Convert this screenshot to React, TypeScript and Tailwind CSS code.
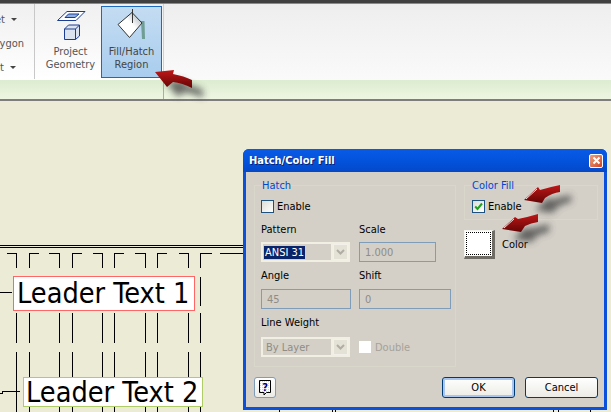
const ui = "font-['DejaVu_Sans',sans-serif] font-stretch-condensed";

const verticals = [16, 29, 59, 72, 102, 114, 145, 157, 188, 200];
const ticks = [
  [7, 16],
  [29, 39],
  [49, 59],
  [72, 82],
  [93, 102],
  [114, 124],
  [135, 145],
  [157, 167],
  [179, 188],
  [200, 212],
  [220, 243],
];

function CanvasLines() {
  return (
    <svg className="absolute left-0 top-0" width="611" height="412" shapeRendering="crispEdges">
      <g stroke="#000" strokeWidth="1" fill="none">
        <path d="M0 245.5H243M0 247.5H243" />
        {ticks.map(([a, b]) => (
          <path key={a} d={`M${a} 253.5H${b}`} />
        ))}
        {verticals.map((x) => (
          <path key={x} d={`M${x + 0.5} 253V268M${x + 0.5} 313V343M${x + 0.5} 352V412`} />
        ))}
        <path d="M200.5 277V306" />
        <path d="M0 292.5H12M0 393.5H2V391.5H20" />
        <path d="M279.5 410V412M332.5 410V412M335.5 410V412M553.5 410V412M558.5 410V412M590.5 410V412" />
      </g>
    </svg>
  );
}

function Arrows() {
  const arrows = [
    "M155 72 L174 70 L173 74 Q184 76 192 80 L192 88 Q182 83 173 82 L167 87 Z",
    "M524 200 L538 187 L540 190 Q550 187 560 185 L560 192 Q552 193 545 198 L542 203 Z",
    "M502 229 L515 217 L518 219 Q528 217 538 214 L538 222 Q531 223 525 226 L521 232 Z",
  ];
  return (
    <svg className="absolute left-0 top-0 pointer-events-none" width="611" height="412">
      <defs>
        <filter id="soft" x="-50%" y="-50%" width="200%" height="200%">
          <feGaussianBlur stdDeviation="3.5" />
        </filter>
        <linearGradient id="red" x1="0" y1="0" x2="0" y2="1">
          <stop offset="0" stopColor="#c01818" />
          <stop offset="1" stopColor="#640404" />
        </linearGradient>
      </defs>
      {arrows.map((d, i) => (
        <g key={i}>
          <path d={d} fill="#444" opacity="0.8" filter="url(#soft)" transform="translate(11 10)" />
          <path d={d} fill="url(#red)" />
        </g>
      ))}
      <path d="M526 199 L537 189M504 228 L514 219" stroke="#f6d8d8" strokeWidth="1" />
    </svg>
  );
}

function ProjectIcon() {
  return (
    <svg width="30" height="30" viewBox="0 0 30 30">
      <path d="M1.5 10.5 L11 1.5 H29 L20 10.5 Z" fill="#fff" stroke="#1c3d94" />
      <path d="M9 7.5 L12.5 4 H23 L19 7.5 Z" fill="#8fb0e0" stroke="#1c3d94" />
      <path d="M8.5 19 L12.5 15 H23.5 V26 L19.5 29.5 H8.5 Z" fill="#dbe3ee" stroke="#1c3d94" />
      <path d="M8.5 19 H19.5 V29.5 M19.5 19 L23.5 15" fill="none" stroke="#1c3d94" />
    </svg>
  );
}

function FillIcon() {
  return (
    <svg width="30" height="32" viewBox="0 0 30 32">
      <defs>
        <linearGradient id="dia" x1="0" y1="1" x2="1" y2="0">
          <stop offset="0" stopColor="#fff" />
          <stop offset="0.55" stopColor="#fff" />
          <stop offset="1" stopColor="#9aa4ac" />
        </linearGradient>
      </defs>
      <path d="M24 12 H27.5 L28 30 H25 Z" fill="#6f9e94" />
      <path d="M1 15.5 L15 3.5 L25 14 L12.5 28.5 Z" fill="url(#dia)" stroke="#333" />
      <path d="M15.5 0 V14" stroke="#333" />
    </svg>
  );
}

function HelpIcon() {
  return (
    <svg width="14" height="17" viewBox="0 0 14 17">
      <defs>
        <pattern id="dots" width="2" height="2" patternUnits="userSpaceOnUse">
          <rect width="2" height="2" fill="#fff" />
          <rect width="1" height="1" fill="#f2e23c" />
        </pattern>
      </defs>
      <path d="M1.5 1.5 H12.5 V13.5 H8.5 L6 16 V13.5 H1.5 Z" fill="url(#dots)" stroke="#000" />
      <text x="7" y="11.5" textAnchor="middle" fontSize="11" fontWeight="700" fill="#000080" fontFamily="DejaVu Sans, sans-serif">?</text>
    </svg>
  );
}

function RibbonStub({ text, caret, right }: { text: string; caret?: boolean; right: string }) {
  return (
    <div className={`flex items-center justify-end gap-[6px] h-[24px] whitespace-nowrap ${right}`}>
      <span>{text}</span>
      {caret && <span className="w-0 h-0 border-x-[3px] border-x-transparent border-t-[3px] border-t-[#444]" />}
    </div>
  );
}

function Ribbon() {
  return (
    <div className={`${ui} flex h-[76px] bg-gradient-to-b from-[#f0f0f0] to-white text-[11px] leading-[13px] text-[#555]`}>
      <div className="w-[35px] overflow-hidden border-r border-[#c8c8c8] mb-[1px] flex flex-col justify-start pt-[3px]">
        <RibbonStub text="et" caret right="pr-[17px]" />
        <RibbonStub text="lygon" right="pr-[10px]" />
        <RibbonStub text="ct" caret right="pr-[18px]" />
      </div>
      <div className="w-[66px] flex flex-col items-center pt-[6px] pl-[5px] text-center">
        <ProjectIcon />
        <div className="mt-[5px] leading-[13px]">Project<br />Geometry</div>
      </div>
      <div className="w-[61px] h-[72px] mt-[2px] border border-[#1c6ac0] bg-gradient-to-b from-[#c4dcf2] to-[#a9cdee] flex flex-col items-center pt-[2px] text-center text-[#444]">
        <FillIcon />
        <div className="mt-[4px] leading-[13px]">Fill/Hatch<br />Region</div>
      </div>
      <div className="w-[1px]" />
      <div className="flex-1 border-l border-[#d0d0d0] bg-gradient-to-b from-[#eeeeee] to-[#fafafa]" />
    </div>
  );
}

function DropDown({ value, selected, disabled }: { value: string; selected?: boolean; disabled?: boolean }) {
  return (
    <div className="w-[89px] h-[20px] bg-[#f1efe4] flex items-center p-[2px] gap-[2px]">
      <div className="w-[71px] h-[16px] bg-[#d4d0c8] flex items-center pl-[1px]">
        <span className={selected ? "bg-[#0a246a] text-white px-[1px] leading-[13px]" : disabled ? "text-[#8f8c84] pl-[2px]" : ""}>
          {value}
        </span>
      </div>
      <div className="w-[15px] h-[16px] bg-[#e4e1d6] border border-[#f2f0e8] flex items-center justify-center">
        <svg width="9" height="6" viewBox="0 0 9 6">
          <path d="M1 1 L4.5 4.5 L8 1" fill="none" stroke="#b0ada4" strokeWidth="2" />
        </svg>
      </div>
    </div>
  );
}

function TextBox({ value, width }: { value: string; width: string }) {
  return (
    <div className={`${width} h-[20px] border border-[#7f9db9] flex items-center pl-[5px] text-[#8f8c84]`}>{value}</div>
  );
}

function CheckBox({ checked }: { checked?: boolean }) {
  return (
    <div className="w-[13px] h-[13px] border border-[#1c5180] bg-gradient-to-br from-[#dcdcd7] to-white flex items-center justify-center">
      {checked && (
        <svg width="9" height="9" viewBox="0 0 9 9">
          <path d="M1.2 4.5 L3.5 7 L8 1.5" fill="none" stroke="#21a121" strokeWidth="2" />
        </svg>
      )}
    </div>
  );
}

function XpButton({ label, isDefault }: { label: string; isDefault?: boolean }) {
  return (
    <button
      className={`w-[73px] h-[21px] rounded-[3px] border border-[#003c74] bg-gradient-to-b from-white to-[#ecebe5] text-black text-[11px] ${isDefault ? "shadow-[inset_0_0_0_2px_#a9c4ee]" : ""}`}
    >
      {label}
    </button>
  );
}

function HatchDialog() {
  return (
    <div className={`${ui} absolute left-[243px] top-[149px] w-[364px] h-[261px] rounded-t-[6px] bg-[#0a50dc] flex flex-col text-[11px] leading-[13px] text-black`}>
      <div className="h-[23px] shrink-0 rounded-t-[6px] bg-gradient-to-b from-[#0a5ae6] via-[#0353dd] to-[#0448c8] flex items-center justify-between pl-[6px] pr-[4px]">
        <span className="text-white font-bold text-[11px] [text-shadow:1px_1px_#0a1f70]">Hatch/Color Fill</span>
        <div className="w-[14px] h-[14px] rounded-[2px] border border-white bg-gradient-to-br from-[#e8a080] to-[#d0401c] flex items-center justify-center">
          <svg width="9" height="9" viewBox="0 0 9 9">
            <path d="M1.5 1.5 L7.5 7.5 M7.5 1.5 L1.5 7.5" stroke="#fff" strokeWidth="2" />
          </svg>
        </div>
      </div>
      <div className="flex-1 mx-[3px] mb-[3px] bg-[#d4d0c8] flex flex-col">
        <div className="flex pt-[13px] pl-[8px] gap-[8px]">
          <div className="w-[202px] h-[182px] border border-[#d9d6ca] pl-[6px]">
            <div className="-mt-[7px] ml-[1px] w-fit bg-[#d4d0c8] text-[#0046d5]">Hatch</div>
            <div className="mt-[8px] flex items-center gap-[3px]">
              <CheckBox />
              <span>Enable</span>
            </div>
            <div className="mt-[10px] grid grid-cols-[98px_92px]">
              <span className="h-[19px]">Pattern</span>
              <span className="h-[19px]">Scale</span>
              <DropDown value="ANSI 31" selected />
              <TextBox value="1.000" width="w-[77px]" />
              <span className="h-[20px] mt-[7px]">Angle</span>
              <span className="h-[20px] mt-[7px]">Shift</span>
              <TextBox value="45" width="w-[90px]" />
              <TextBox value="0" width="w-[92px]" />
              <span className="col-span-2 h-[21px] mt-[7px]">Line Weight</span>
              <DropDown value="By Layer" disabled />
              <div className="flex items-center gap-[4px] text-[#a5a298] h-[20px]">
                <div className="w-[12px] h-[12px] bg-white" />
                <span>Double</span>
              </div>
            </div>
          </div>
          <div className="w-[134px]">
            <div className="h-[35px] border border-[#d9d6ca] pl-[7px]">
              <div className="-mt-[7px] w-fit bg-[#d4d0c8] text-[#0046d5]">Color Fill</div>
              <div className="mt-[8px] flex items-center gap-[3px]">
                <CheckBox checked />
                <span>Enable</span>
              </div>
            </div>
            <div className="mt-[10px] flex items-center gap-[7px]">
              <div className="w-[31px] h-[29px] bg-white border-r-[3px] border-b-[3px] border-[#6f6c66] border-t border-l border-t-[#f5f5f0] border-l-[#f5f5f0] p-[1px]">
                <div className="w-full h-full border border-dotted border-black" />
              </div>
              <span>Color</span>
            </div>
          </div>
        </div>
        <div className="mt-auto mb-[9px] flex items-center pl-[8px] pr-[6px]">
          <div className="w-[22px] h-[21px] rounded-[3px] border border-[#7f9db9] bg-gradient-to-b from-white to-[#ecebe5] flex items-center justify-center">
            <HelpIcon />
          </div>
          <div className="ml-auto flex gap-[10px]">
            <XpButton label="OK" isDefault />
            <XpButton label="Cancel" />
          </div>
        </div>
      </div>
    </div>
  );
}

export default function App() {
  return (
    <div className="relative w-[611px] h-[412px] overflow-hidden bg-[#ecebd5] flex flex-col">
      <div className="h-[4px] bg-[#404040] border-b border-[#8a8a8a]" />
      <Ribbon />
      <div className="h-[19px] bg-gradient-to-b from-[#dcecd0] to-[#eef6e2] flex">
        <div className="ml-[163px] w-px bg-[#a8b0a0]" />
      </div>
      <div className="h-[2px] bg-[#7d7d7d]" />
      <div className="flex-1 bg-[#ecebd5]" />
      <CanvasLines />
      <div className="absolute left-[13px] top-[276px] w-[182px] h-[35px] bg-white border border-[#ff6666] pl-[3px] font-['DejaVu_Sans',sans-serif] font-stretch-condensed text-[28.6px] leading-[32px] text-black whitespace-nowrap">
        Leader Text 1
      </div>
      <div className="absolute left-[23px] top-[377px] w-[180px] h-[30px] bg-white border border-[#b0cc66] pl-[2px] font-['DejaVu_Sans',sans-serif] font-stretch-condensed text-[28.6px] leading-[28px] text-black whitespace-nowrap">
        Leader Text 2
      </div>
      <HatchDialog />
      <Arrows />
    </div>
  );
}
